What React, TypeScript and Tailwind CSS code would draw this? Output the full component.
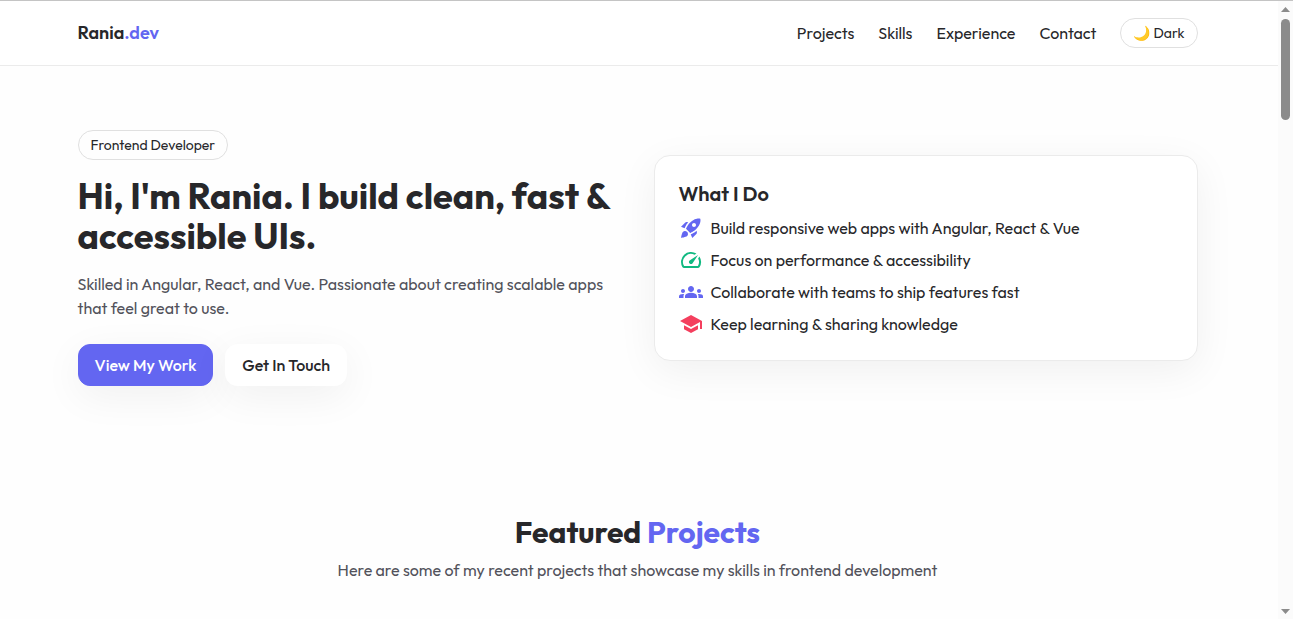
import { useState } from "react";
import type { IconType } from "react-icons";
import { MdGroups, MdRocketLaunch, MdSchool, MdSpeed } from "react-icons/md";

const links = ["Projects", "Skills", "Experience", "Contact"];

const services: { icon: IconType; color: string; text: string }[] = [
  { icon: MdRocketLaunch, color: "text-[#6366f1]", text: "Build responsive web apps with Angular, React & Vue" },
  { icon: MdSpeed, color: "text-[#10b981]", text: "Focus on performance & accessibility" },
  { icon: MdGroups, color: "text-[#6366f1]", text: "Collaborate with teams to ship features fast" },
  { icon: MdSchool, color: "text-[#f43f5e]", text: "Keep learning & sharing knowledge" },
];

function Header() {
  const [dark, setDark] = useState(false);
  return (
    <header className="border-b border-[#ebebeb] bg-white pr-[3px]">
      <div className="mx-auto flex h-16 max-w-6xl items-center justify-between px-4">
        <a href="#top" className="text-lg font-semibold">
          Rania<span className="text-[#6366f1]">.dev</span>
        </a>
        <nav className="flex items-center gap-6">
          {links.map((link) => (
            <a key={link} href={`#${link.toLowerCase()}`}>
              {link}
            </a>
          ))}
          <button
            type="button"
            aria-pressed={dark}
            onClick={() => setDark(!dark)}
            className="rounded-full border border-[#e0e0e0] px-3 py-1 text-sm"
          >
            🌙 Dark
          </button>
        </nav>
      </div>
    </header>
  );
}

function Hero() {
  return (
    <section id="top" className="mx-auto grid max-w-6xl items-center gap-8 px-4 py-16 md:grid-cols-2">
      <div>
        <span className="inline-block rounded-full border border-[#e0e0e0] px-3 py-1 align-top text-sm">
          Frontend Developer
        </span>
        <h1 className="mt-4 text-4xl leading-10 font-bold">
          Hi, I'm Rania. I build clean, fast &amp; accessible UIs.
        </h1>
        <p className="mt-4 text-[#52525b]">
          Skilled in Angular, React, and Vue. Passionate about creating scalable apps that feel great to use.
        </p>
        <div className="mt-6 flex gap-3">
          <a
            href="#projects"
            className="rounded-xl border border-[#6366f1] bg-[#6366f1] px-4 py-2 font-medium text-white shadow-[0_10px_40px_rgba(0,0,0,0.06)]"
          >
            View My Work
          </a>
          <a
            href="#contact"
            className="rounded-xl border border-white bg-white px-4 py-2 font-medium shadow-[0_10px_40px_rgba(0,0,0,0.06)]"
          >
            Get In Touch
          </a>
        </div>
      </div>
      <div className="rounded-2xl border border-[#ebebeb] bg-white p-6 shadow-[0_10px_40px_rgba(0,0,0,0.06)]">
        <h2 className="text-xl leading-7 font-semibold">What I Do</h2>
        <ul className="mt-2 space-y-2">
          {services.map(({ icon: Icon, color, text }) => (
            <li key={text} className="flex items-center gap-2">
              <Icon className={`size-6 shrink-0 ${color}`} aria-hidden="true" />
              {text}
            </li>
          ))}
        </ul>
      </div>
    </section>
  );
}

function Scrollbar() {
  return (
    <div className="sticky top-0 flex h-screen w-[15px] shrink-0 flex-col items-center bg-[#fbfbfb] py-1.5" aria-hidden="true">
      <svg viewBox="0 0 9 5" className="h-[5px] w-[9px]">
        <path d="M4.500 0 9 5H0z" fill="#8b8b8b" />
      </svg>
      <div className="mt-[7px] h-1/6 w-[9px] rounded-full bg-[#8b8b8b]" />
      <svg viewBox="0 0 9 5" className="mt-auto h-[5px] w-[9px]">
        <path d="M0 0h9L4.500 5z" fill="#8b8b8b" />
      </svg>
    </div>
  );
}

export default function App() {
  return (
    <div className="flex h-screen overflow-hidden border-t border-[#c4c4c4] bg-[#fefefe] font-['Outfit','Lato',sans-serif] text-base text-[#27272a]">
      <div className="min-w-0 flex-1">
        <Header />
        <main className="pr-[3px]">
          <Hero />
          <section id="projects" className="mx-auto max-w-6xl px-4 py-16 text-center">
            <h2 className="text-3xl leading-9 font-bold">
              Featured <span className="text-[#6366f1]">Projects</span>
            </h2>
            <p className="mt-2 text-[#52525b]">
              Here are some of my recent projects that showcase my skills in frontend development
            </p>
          </section>
        </main>
      </div>
      <Scrollbar />
    </div>
  );
}
